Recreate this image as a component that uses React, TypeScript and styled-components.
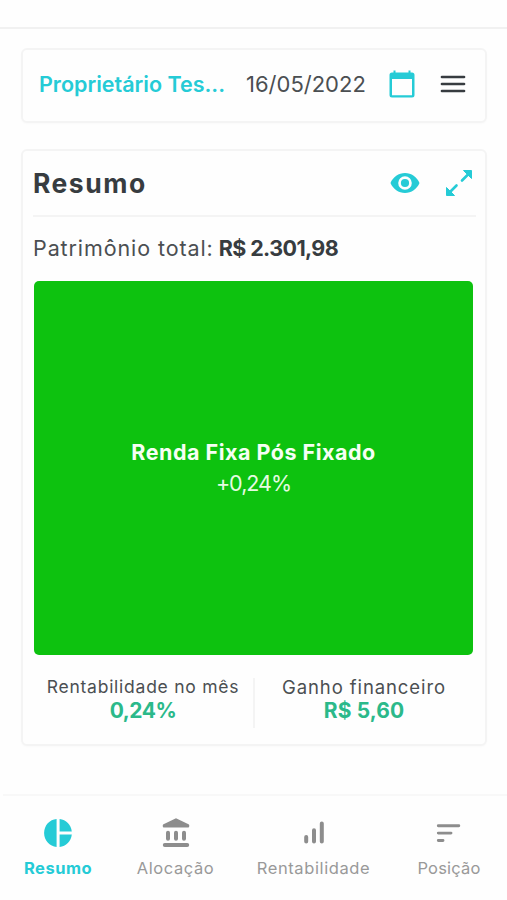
import React from "react";
import styled, { createGlobalStyle } from "styled-components";

const CYAN = "#25cbd6";
const INK = "#373c40";
const SOFT_INK = "#4b4f52";
const GREY = "#8d8d8d";
const MINT = "#2bb98a";

const GlobalStyle = createGlobalStyle`
  * { box-sizing: border-box; }
  body { margin: 0; background: #fefefe; font-family: Inter, "Open Sans", sans-serif; }
`;

const Screen = styled.div`
  width: 507px;
  height: 900px;
  display: flex;
  flex-direction: column;
  overflow: hidden;
`;

const TopEdge = styled.div`
  height: 29px;
  flex: none;
  border-bottom: 2px solid #f1f1f1;
`;

const Content = styled.main`
  flex: 1;
  padding: 19px 20px 0 21px;
`;

const Card = styled.section`
  border: 2px solid #f4f4f4;
  border-radius: 6px;
  background: #fefefe;
  box-shadow: 0 1px 2px rgba(0, 0, 0, 0.02);
`;

const AccountBar = styled(Card)`
  height: 75px;
  display: flex;
  align-items: center;
  padding: 0 19px 4px 16px;
`;

const SummaryCard = styled(Card)`
  height: 597px;
  margin-top: 26px;
  padding: 0 9px 0 10px;
`;

const Label = styled.span<{ $size: number; $line: number; $weight?: number; $space?: number; $color?: string }>`
  display: block;
  margin: 0;
  white-space: nowrap;
  font-size: ${(p) => p.$size}px;
  line-height: ${(p) => p.$line}px;
  font-weight: ${(p) => p.$weight ?? 400};
  letter-spacing: ${(p) => p.$space ?? 0}px;
  color: ${(p) => p.$color ?? INK};
`;

const Owner = styled(Label)`
  width: 207px;
`;

const DateText = styled(Label)`
  flex: 1;
`;

const Icon = styled.svg`
  display: block;
  flex: none;
`;

const MenuIcon = styled(Icon)`
  margin-left: 25px;
`;

const CardHeader = styled.header`
  height: 66px;
  display: flex;
  align-items: center;
  border-bottom: 2px solid #f4f4f4;
  padding-right: 3px;
`;

const Heading = styled(Label)`
  flex: 1;
`;

const ExpandIcon = styled(Icon)`
  margin-left: 25px;
`;

const Total = styled.div`
  height: 64px;
  display: flex;
  align-items: center;
  gap: 5px;
  padding-bottom: 2px;
`;

const Tile = styled.div`
  width: 439px;
  height: 374px;
  margin-left: 1px;
  border-radius: 5px;
  background: #0dc20f;
  display: flex;
  flex-direction: column;
  align-items: center;
  justify-content: center;
`;

const Metrics = styled.div`
  height: 50px;
  margin-top: 23px;
  display: flex;
`;

const Metric = styled.div`
  width: 220px;
  display: flex;
  flex-direction: column;
  align-items: center;

  & + & {
    border-left: 2px solid #f4f4f4;
  }
`;

const TabBar = styled.nav`
  height: 106px;
  flex: none;
  border-top: 2px solid #f8f8f8;
  margin-left: 3px;
  padding-top: 22px;
  display: grid;
  grid-template-columns: 110px 125px 151px 120px;
`;

const Tab = styled.div`
  display: flex;
  flex-direction: column;
  align-items: center;
  gap: 9px;
`;

const CalendarGlyph = () => (
  <Icon width="26" height="28" viewBox="0 0 26 28">
    <path fill={CYAN} fillRule="evenodd" d="M4.500 .5h2V2.500h13V.5h2v2H23A2.500 2.500 0 0 1 25.500 5v20a2.500 2.500 0 0 1-2.500 2.500H3A2.500 2.500 0 0 1 .5 25V5A2.500 2.500 0 0 1 3 2.500h1.500zM3 9v16.200h20V9z" />
  </Icon>
);

const MenuGlyph = () => (
  <MenuIcon width="26" height="18" viewBox="0 0 26 18">
    <path d="M2 2h22M2 9h22M2 16h22" stroke={INK} strokeWidth="2.700" strokeLinecap="round" />
  </MenuIcon>
);

const EyeGlyph = () => (
  <Icon width="30" height="22" viewBox="0 0 30 22">
    <path fill={CYAN} fillRule="evenodd" d="M15 1C8.600 1 3 5 .5 11 3 17 8.600 21 15 21s12-4 14.500-10C27 5 21.400 1 15 1zm0 3.200a6.800 6.800 0 1 1 0 13.600 6.800 6.800 0 0 1 0-13.600z" />
    <circle cx="15" cy="11" r="4.100" fill={CYAN} />
  </Icon>
);

const ExpandGlyph = () => (
  <ExpandIcon width="28" height="28" viewBox="0 0 28 28">
    <path fill={CYAN} stroke={CYAN} strokeLinejoin="round" d="M18.500 1.500h8v8zM1.500 18.500v8h8z" />
    <path d="M17 11.500l7-7M11.500 16.500l-7 7" stroke={CYAN} strokeWidth="2.600" strokeLinecap="round" />
  </ExpandIcon>
);

const PieGlyph = () => (
  <Icon width="30" height="30" viewBox="0 0 30 30">
    <path fill={CYAN} d="M13.600 1.100v27.800C6.600 28.300 1.100 22.500 1.100 15S6.600 1.700 13.600 1.100zM16.600 1.100c6.500.7 11.500 5.700 12.200 12.300H16.600zM16.600 16.400h12.200c-.7 6.600-5.700 11.800-12.200 12.500z" />
  </Icon>
);

const BankGlyph = () => (
  <Icon width="30" height="30" viewBox="0 0 30 30">
    <path fill={GREY} d="M15 .2 27.500 6.300c1.200.7.900 3.300-.5 3.300H3c-1.400 0-1.700-2.600-.5-3.300z" />
    <path d="M7 14.700v6M15 14.700v6M23 14.700v6M3.800 27h22.400" stroke={GREY} strokeWidth="4" strokeLinecap="round" />
  </Icon>
);

const BarsGlyph = () => (
  <Icon width="30" height="30" viewBox="0 0 30 30">
    <path d="M7.200 19v4.500M15 12.300v11.200M22.800 5.500v18" stroke={GREY} strokeWidth="4" strokeLinecap="round" />
  </Icon>
);

const LinesGlyph = () => (
  <Icon width="30" height="30" viewBox="0 0 30 30">
    <path d="M4.300 7.700h20.500M4.300 15.100H17M4.300 22.500H9" stroke={GREY} strokeWidth="2.900" strokeLinecap="round" />
  </Icon>
);

const tabs = [
  { name: "Resumo", glyph: <PieGlyph />, active: true, space: 0.5 },
  { name: "Alocação", glyph: <BankGlyph />, active: false, space: 0.6 },
  { name: "Rentabilidade", glyph: <BarsGlyph />, active: false, space: 0.6 },
  { name: "Posição", glyph: <LinesGlyph />, active: false, space: 0.2 },
];

export default function App() {
  return (
    <Screen>
      <GlobalStyle />
      <TopEdge />
      <Content>
        <AccountBar>
          <Owner $size={21.5} $line={30} $weight={600} $color={CYAN}>Proprietário Tes...</Owner>
          <DateText $size={22} $line={30} $color={SOFT_INK}>16/05/2022</DateText>
          <CalendarGlyph />
          <MenuGlyph />
        </AccountBar>
        <SummaryCard>
          <CardHeader>
            <Heading as="h1" $size={26.5} $line={36} $weight={700} $space={1.5}>Resumo</Heading>
            <EyeGlyph />
            <ExpandGlyph />
          </CardHeader>
          <Total>
            <Label $size={21.5} $line={30} $space={0.9} $color={SOFT_INK}>Patrimônio total:</Label>
            <Label $size={21.5} $line={30} $weight={700} $space={-0.6}>R$ 2.301,98</Label>
          </Total>
          <Tile>
            <Label $size={21.5} $line={31} $weight={700} $space={0.5} $color="#f6fff4">Renda Fixa Pós Fixado</Label>
            <Label $size={21.5} $line={31} $space={-1} $color="#e6fbe2">+0,24%</Label>
          </Tile>
          <Metrics>
            <Metric>
              <Label $size={17.5} $line={18} $space={0.75} $color={SOFT_INK}>Rentabilidade no mês</Label>
              <Label $size={21} $line={30} $weight={700} $space={-0.5} $color={MINT}>0,24%</Label>
            </Metric>
            <Metric>
              <Label $size={18.5} $line={18} $space={0.9} $color={SOFT_INK}>Ganho financeiro</Label>
              <Label $size={21} $line={30} $weight={700} $space={0.1} $color={MINT}>R$ 5,60</Label>
            </Metric>
          </Metrics>
        </SummaryCard>
      </Content>
      <TabBar>
        {tabs.map((t) => (
          <Tab key={t.name}>
            {t.glyph}
            <Label $size={16.5} $line={22} $weight={t.active ? 700 : 400} $space={t.space} $color={t.active ? CYAN : "#999999"}>{t.name}</Label>
          </Tab>
        ))}
      </TabBar>
    </Screen>
  );
}
